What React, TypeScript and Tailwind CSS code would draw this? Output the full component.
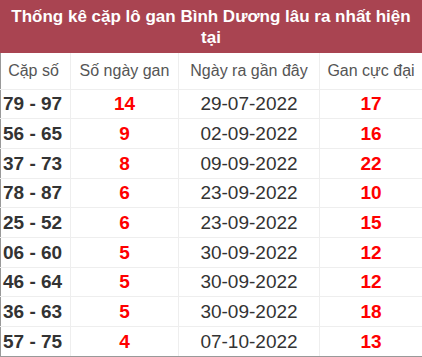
const rows = [
  ["79 - 97", "14", "29-07-2022", "17"],
  ["56 - 65", "9", "02-09-2022", "16"],
  ["37 - 73", "8", "09-09-2022", "22"],
  ["78 - 87", "6", "23-09-2022", "10"],
  ["25 - 52", "6", "23-09-2022", "15"],
  ["06 - 60", "5", "30-09-2022", "12"],
  ["46 - 64", "5", "30-09-2022", "12"],
  ["36 - 63", "5", "30-09-2022", "18"],
  ["57 - 75", "4", "07-10-2022", "13"],
];

export default function App() {
  return (
    <div className="h-[357px] w-[422px] bg-white font-['Liberation_Sans',Arial,sans-serif]">
      <div className="flex h-[53px] items-center justify-center bg-[#a94451] px-2 text-center text-[17px] font-bold leading-[21px] text-white">
        Thống kê cặp lô gan Bình Dương lâu ra nhất hiện tại
      </div>
      <table className="w-[422px] table-fixed border-collapse">
        <colgroup>
          <col className="w-[70px]" />
          <col className="w-[108px]" />
          <col className="w-[141px]" />
          <col className="w-[103px]" />
        </colgroup>
        <thead>
          <tr className="h-[36px] text-[16px] text-[#555]">
            <th className="border border-t-0 border-[#eeeeee] border-l-[#999] p-0 pr-1 font-normal">Cặp số</th>
            <th className="border border-t-0 border-[#eeeeee] p-0 font-normal">Số ngày gan</th>
            <th className="border border-t-0 border-[#eeeeee] p-0 font-normal">Ngày ra gần đây</th>
            <th className="border border-t-0 border-[#eeeeee] border-r-[#999] p-0 font-normal">Gan cực đại</th>
          </tr>
        </thead>
        <tbody>
          {rows.map((r, i) => {
            const last = i === rows.length - 1;
            const b = last ? "border-b-[#999]" : "";
            return (
              <tr key={i} className="h-[29.7px] text-[19px] leading-none">
                <td className={`border border-[#eeeeee] border-l-[#999] p-0 pl-[2px] text-left font-bold text-[#333] ${b}`}>{r[0]}</td>
                <td className={`border border-[#eeeeee] p-0 text-center font-bold text-[#ff0000] ${b}`}>{r[1]}</td>
                <td className={`border border-[#eeeeee] p-0 text-center text-[#333] ${b}`}>{r[2]}</td>
                <td className={`border border-[#eeeeee] border-r-[#999] p-0 text-center font-bold text-[#ff0000] ${b}`}>{r[3]}</td>
              </tr>
            );
          })}
        </tbody>
      </table>
    </div>
  );
}
